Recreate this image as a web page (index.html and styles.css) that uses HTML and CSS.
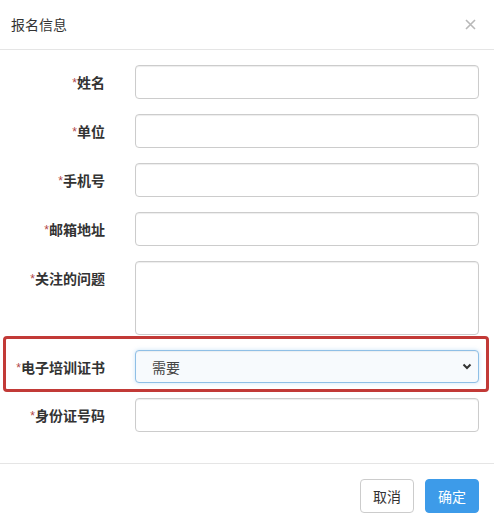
FILE: index.html
```html
<!DOCTYPE html>
<html lang="zh-CN">
<head>
<meta charset="utf-8">
<title>报名信息</title>
<link rel="stylesheet" href="styles.css">
</head>
<body>
<div class="modal">
  <div class="modal-header">
    <h4 class="modal-title">报名信息</h4>
    <button class="close" type="button" aria-label="关闭">
      <svg width="11" height="11" viewBox="0 0 11 11"><path d="M1 1L10 10M10 1L1 10" stroke="#b8b8b8" stroke-width="1.6" fill="none"/></svg>
    </button>
  </div>
  <form class="modal-body">
    <div class="form-group">
      <label class="control-label"><span class="req">*</span>姓名</label>
      <input class="form-control" type="text">
    </div>
    <div class="form-group">
      <label class="control-label"><span class="req">*</span>单位</label>
      <input class="form-control" type="text">
    </div>
    <div class="form-group">
      <label class="control-label"><span class="req">*</span>手机号</label>
      <input class="form-control" type="text">
    </div>
    <div class="form-group">
      <label class="control-label"><span class="req">*</span>邮箱地址</label>
      <input class="form-control" type="text">
    </div>
    <div class="form-group">
      <label class="control-label"><span class="req">*</span>关注的问题</label>
      <textarea class="form-control textarea"></textarea>
    </div>
    <div class="form-group highlighted">
      <label class="control-label"><span class="req">*</span>电子培训证书</label>
      <div class="select-wrap">
        <select class="form-control select">
          <option>需要</option>
          <option>不需要</option>
        </select>
        <svg class="chevron" width="10" height="7" viewBox="0 0 10 7"><path d="M1.5 1.5L5 5L8.5 1.5" stroke="#333" stroke-width="2" fill="none"/></svg>
      </div>
    </div>
    <div class="form-group">
      <label class="control-label"><span class="req">*</span>身份证号码</label>
      <input class="form-control" type="text">
    </div>
  </form>
  <div class="modal-footer">
    <button class="btn btn-default" type="button">取消</button>
    <button class="btn btn-primary" type="button">确定</button>
  </div>
</div>
</body>
</html>
```

FILE: styles.css
```css
* { box-sizing: border-box; }
html, body { margin: 0; padding: 0; background: #fff; }
body {
  font-family: "Noto Sans CJK SC", "Noto Sans", sans-serif;
  font-size: 14px;
  line-height: 20px;
  color: #333;
}
.modal {
  width: 494px;
  height: 528px;
  background: #fff;
  display: flex;
  flex-direction: column;
}
.modal-header {
  height: 50px;
  padding: 0 18px 0 11px;
  border-bottom: 1px solid #e5e5e5;
  display: flex;
  align-items: center;
  justify-content: space-between;
}
.modal-title {
  margin: 0;
  font-size: 14px;
  font-weight: 400;
  color: #333;
  line-height: 20px;
  padding-bottom: 1px;
}
.close {
  border: 0;
  background: none;
  padding: 0;
  margin: 0;
  width: 11px;
  height: 11px;
  display: block;
  line-height: 0;
}
.modal-body {
  margin: 0;
  padding: 15px 15px 15px 0;
  display: flex;
  flex-direction: column;
  gap: 15px;
}
.form-group {
  display: grid;
  grid-template-columns: 105px 1fr;
  column-gap: 30px;
  align-items: start;
}
.control-label {
  text-align: right;
  padding-top: 7px;
  font-weight: 700;
  line-height: 20px;
  color: #333;
  white-space: nowrap;
}
.req {
  color: #b14548;
  font-weight: 400;
  font-size: 12px;
  font-family: "Liberation Sans", sans-serif;
  vertical-align: 1px;
}
.form-control {
  display: block;
  width: 100%;
  height: 34px;
  margin: 0;
  padding: 6px 12px;
  font: inherit;
  color: #555;
  background: #fff;
  border: 1px solid #ccc;
  border-radius: 4px;
  box-shadow: inset 0 1px 1px rgba(0,0,0,.075);
}
.textarea {
  height: 74px;
  resize: none;
}
.highlighted { position: relative; }
.highlighted::after {
  content: "";
  position: absolute;
  top: -14px;
  bottom: -9px;
  left: 3px;
  right: -10px;
  border: 3px solid #c23a37;
  border-radius: 4px;
  pointer-events: none;
}
.select-wrap { position: relative; }
.select {
  -webkit-appearance: none;
  appearance: none;
  padding-left: 16px;
  height: 33px;
  color: #444;
  background: #f7fafd;
  border-color: #8fbfe6;
  box-shadow: inset 0 1px 1px rgba(0,0,0,.05), 0 0 4px rgba(102,175,233,.35);
}
.chevron {
  position: absolute;
  right: 7px;
  top: 13px;
  pointer-events: none;
}
.modal-footer {
  margin-top: auto;
  border-top: 1px solid #e5e5e5;
  padding: 15px;
  display: flex;
  justify-content: flex-end;
  gap: 11px;
}
.btn {
  height: 34px;
  padding: 6px 12px;
  font: inherit;
  line-height: 20px;
  border-radius: 4px;
  border: 1px solid transparent;
  margin: 0;
}
.btn-default {
  background: #fff;
  border-color: #ccc;
  color: #333;
}
.btn-primary {
  background: #3d9be9;
  border-color: #3d9be9;
  color: #fff;
}
```
